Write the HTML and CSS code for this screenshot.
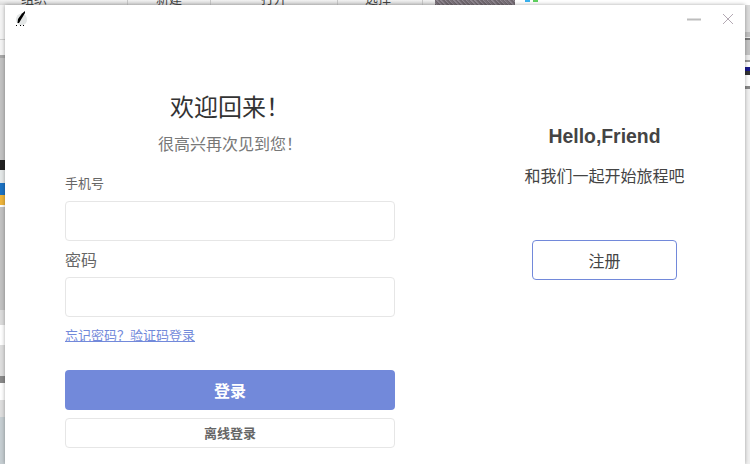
FILE: index.html
```html
<!DOCTYPE html>
<html lang="zh">
<head>
<meta charset="utf-8">
<title>登录</title>
<link rel="stylesheet" href="styles.css">
</head>
<body>
<div class="desktop">
  <div class="toolbar">
    <span class="tool tool-a">组织</span>
    <span class="tool tool-b">新建</span>
    <span class="tool tool-c">打开</span>
    <span class="tool tool-d">选择</span>
    <span class="sep sep-a"></span>
    <span class="sep sep-b"></span>
    <span class="sep sep-c"></span>
    <span class="sep sep-d"></span>
  </div>
  <div class="noise"></div>
  <div class="chip chip-blue"></div>
  <div class="chip chip-green"></div>
  <div class="strip-left"></div>
  <div class="strip-right"></div>
  <main class="dialog">
    <header class="titlebar">
      <svg class="logo" width="14" height="16" viewBox="0 0 14 16">
        <ellipse cx="6.5" cy="8.5" rx="5.5" ry="6" fill="#e3e6e6"/>
        <path d="M10 0 L10 2 L7 7 L4 12 L2.5 12 L3 8 L7 2.5 Z" fill="#000"/>
        <path d="M1 14.5h1M5 14.5h1M8 14.5h1" stroke="#000" stroke-width="1"/>
      </svg>
      <div class="win-controls">
        <svg width="14" height="3" viewBox="0 0 14 3"><rect width="14" height="2" y="0.5" fill="#bdbdbd"/></svg>
        <svg width="12" height="12" viewBox="0 0 12 12"><path d="M1 1 L11 11 M11 1 L1 11" stroke="#b3a9b3" stroke-width="1" fill="none"/></svg>
      </div>
    </header>
    <div class="panels">
      <section class="login">
        <h1 class="welcome">欢迎回来！</h1>
        <p class="subtitle">很高兴再次见到您！</p>
        <label class="label label-small" for="phone">手机号</label>
        <input class="field" id="phone" type="text">
        <label class="label label-large" for="pwd">密码</label>
        <input class="field" id="pwd" type="password">
        <a class="forgot" href="#">忘记密码？验证码登录</a>
        <button class="btn-login" type="button">登录</button>
        <button class="btn-offline" type="button">离线登录</button>
      </section>
      <aside class="promo">
        <h2 class="hello">Hello,Friend</h2>
        <p class="together">和我们一起开始旅程吧</p>
        <button class="btn-register" type="button">注册</button>
      </aside>
    </div>
  </main>
</div>
</body>
</html>
```
FILE: styles.css
```css
* { box-sizing: border-box; }
html, body { margin: 0; padding: 0; }
body {
  width: 750px;
  height: 464px;
  overflow: hidden;
  font-family: "Liberation Sans", "Noto Sans CJK SC", sans-serif;
}
.desktop { position: relative; width: 750px; height: 464px; background: #fff; overflow: hidden; }
.toolbar { position: absolute; left: 0; top: 0; width: 435px; height: 5px; background: linear-gradient(#f2f2f2, #d8d8d8); overflow: hidden; }
.tool { position: absolute; top: -9px; font-size: 13px; line-height: 16px; color: #444; }
.tool-a { left: 21px; }
.tool-b { left: 156px; }
.tool-c { left: 261px; }
.tool-d { left: 365px; }
.sep { position: absolute; top: 0; width: 1px; height: 5px; background: #c8c8c8; }
.sep-a { left: 127px; }
.sep-b { left: 210px; }
.sep-c { left: 337px; }
.sep-d { left: 422px; }
.noise { position: absolute; left: 435px; top: 0; width: 80px; height: 5px; background: repeating-linear-gradient(45deg, #6f676e 0 1px, #8f8790 1px 2px, #7a7279 2px 3px); }
.chip { position: absolute; top: 0; width: 5px; height: 2px; }
.chip-blue { left: 525px; background: #39b1ee; }
.chip-green { left: 533px; background: #5fd05f; }
.strip-left {
  position: absolute; left: 0; top: 5px; width: 5px; height: 459px;
  background: linear-gradient(
    #f4f4f4 0 34px, #cfcfcf 34px 35px, #f4f4f4 35px 50px,
    #a8a8a8 50px 53px, #c2c2c2 53px 155px,
    #222 155px 165px, #e4e8e8 165px 178px, #1c73c4 178px 190px, #efb53c 190px 200px, #fff 200px 202px,
    #c2c2c2 202px 305px, #dcdcdc 305px 320px,
    #fff 320px 340px, #dedede 340px 371px,
    #8a8a8a 371px 378px, #fff 378px 395px, #dedede 395px 412px,
    #c6ced2 412px
  );
}
.strip-right {
  position: absolute; left: 745px; top: 5px; width: 5px; height: 459px;
  background: linear-gradient(
    #dcdcdc 0 27px, #c0c0c0 27px 32px, #eee 32px 33px, #777 33px 35px,
    #c4c4c4 35px 50px, #eee 50px 55px, #999 55px 57px, #fff 57px 62px,
    #1a1a8c 62px 66px, #333 66px 70px, #fff 70px 81px, #888 81px 84px, #f0f0f0 84px
  );
}
.dialog {
  position: absolute;
  left: 5px;
  top: 5px;
  width: 740px;
  height: 459px;
  background: #fff;
  box-shadow: 0 0 4px rgba(0, 0, 0, .35);
  display: flex;
  flex-direction: column;
}
.titlebar { height: 30px; display: flex; justify-content: space-between; align-items: flex-start; padding: 6px 11px 0 10px; flex: none; }
.logo { display: block; }
.win-controls { display: flex; align-items: center; gap: 21px; padding-top: 2px; }
.win-controls svg { display: block; }
.panels { display: flex; flex: 1; }
.login { width: 330px; margin-left: 60px; display: flex; flex-direction: column; }
.welcome { margin: 57px 0 0; font-size: 24px; line-height: 32px; font-weight: 400; color: #333; text-align: center; }
.subtitle { margin: 10px 0 0; font-size: 16px; line-height: 22px; color: #777; text-align: center; }
.label { display: block; color: #666; }
.label-small { margin-top: 19px; font-size: 13px; line-height: 18px; }
.label-large { margin-top: 10px; font-size: 16px; line-height: 20px; }
.field { display: block; width: 330px; height: 40px; margin-top: 8px; border: 1px solid #e6e6e6; border-radius: 4px; background: #fff; padding: 0 10px; }
.label-large + .field { margin-top: 6px; }
.forgot { margin-top: 10px; font-size: 13px; line-height: 18px; color: #7289da; text-decoration: underline; align-self: flex-start; }
.btn-login { margin-top: 25px; width: 330px; height: 40px; border: 0; border-radius: 4px; padding-bottom: 2px; background: #7289da; color: #fff; font: bold 16px "Liberation Sans", "Noto Sans CJK SC", sans-serif; }
.btn-offline { margin-top: 8px; width: 330px; height: 30px; border: 1px solid #e6e6e6; border-radius: 4px; padding-bottom: 2px; background: #fff; color: #666; font: bold 13px "Liberation Sans", "Noto Sans CJK SC", sans-serif; }
.promo { width: 145px; margin-left: 137px; display: flex; flex-direction: column; align-items: center; }
.hello { margin: 89px 0 0; font-size: 19.4px; line-height: 24px; font-weight: bold; color: #444; white-space: nowrap; }
.together { margin: 18px 0 0; font-size: 16px; line-height: 22px; color: #444; white-space: nowrap; }
.btn-register { margin-top: 52px; width: 145px; height: 40px; border: 1px solid #7289da; border-radius: 4px; padding-bottom: 2px; background: #fff; color: #444; font: 16px "Liberation Sans", "Noto Sans CJK SC", sans-serif; }
```
